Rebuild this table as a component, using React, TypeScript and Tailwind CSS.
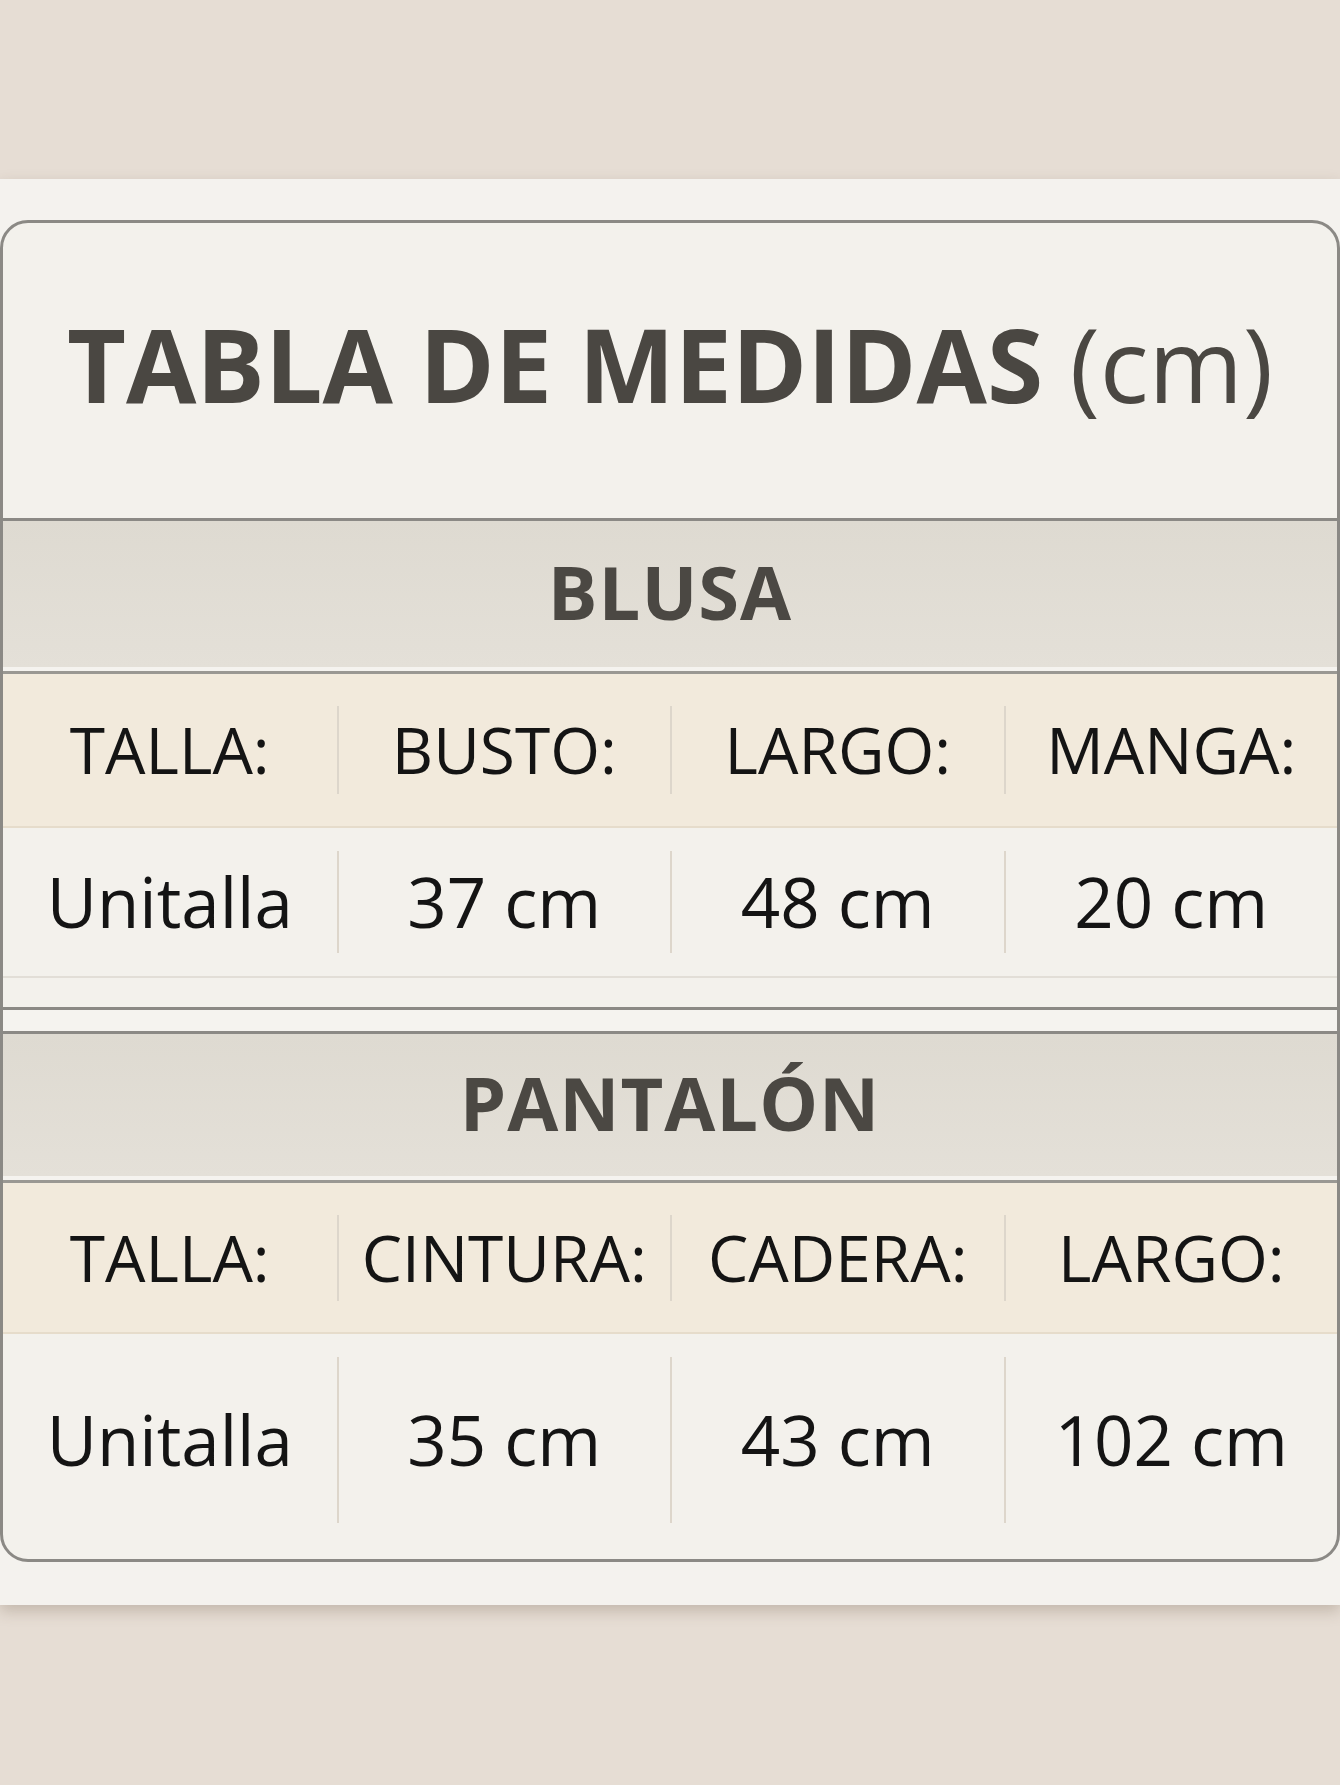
const font = { fontFamily: '"Open Sans", "Noto Sans", sans-serif' }

type Section = {
  name: string
  labels: string[]
  values: string[]
  valueRowH: string
  dividerH: string
}

const sections: Section[] = [
  {
    name: 'BLUSA',
    labels: ['TALLA:', 'BUSTO:', 'LARGO:', 'MANGA:'],
    values: ['Unitalla', '37 cm', '48 cm', '20 cm'],
    valueRowH: 'h-[150px]',
    dividerH: 'h-[102px]',
  },
  {
    name: 'PANTALÓN',
    labels: ['TALLA:', 'CINTURA:', 'CADERA:', 'LARGO:'],
    values: ['Unitalla', '35 cm', '43 cm', '102 cm'],
    valueRowH: 'h-[226px] pb-[14px]',
    dividerH: 'h-[166px]',
  },
]

function Row({ items, className, dividerH }: { items: string[]; className: string; dividerH: string }) {
  return (
    <div className={`flex items-center ${className}`}>
      {items.map((t, i) => (
        <div key={i} className="flex flex-1 items-center">
          {i > 0 && <div className={`w-[2px] ${dividerH} bg-[#ddd6cb]`} />}
          <div className="flex-1 text-center text-[#141414]">{t}</div>
        </div>
      ))}
    </div>
  )
}

function Band({ name, h }: { name: string; h: string }) {
  return (
    <div className={`flex ${h} items-center justify-center bg-gradient-to-b from-[#dedad1] to-[#e4e0d8] pb-[6px]`}>
      <span className="text-[74px] font-bold tracking-[1px] text-[#4b4843]">{name}</span>
    </div>
  )
}

export default function App() {
  return (
    <div className="h-[1785px] w-full overflow-hidden bg-[#e6ddd4] pt-[179px]" style={font}>
      {/* paper */}
      <div className="h-[1426px] bg-[#f4f2ee] pt-[41px] shadow-[0_6px_14px_rgba(90,70,50,0.25)]">
        <div className="h-[1342px] overflow-hidden rounded-[28px] border-[3px] border-[#8b8985] bg-[#f3f1ec]">
          {/* title */}
          <div className="flex h-[295px] items-center justify-center pb-[14px]">
            <h1 className="text-[102px] leading-none text-[#4a4742]">
              <span className="font-bold">TABLA DE MEDIDAS</span>{' '}
              <span className="font-normal">(cm)</span>
            </h1>
          </div>
          <div className="h-[3px] bg-[#8b8985]" />

          {/* blusa */}
          <Band name={sections[0].name} h="h-[146px]" />
          <div className="h-[4px] bg-[#f5f3ef]" />
          <div className="h-[3px] bg-[#9a9893]" />
          <Row
            items={sections[0].labels}
            className="h-[154px] bg-[#f2eadc] text-[64px] border-b-[2px] border-[#e6dccb]"
            dividerH="h-[88px]"
          />
          <Row
            items={sections[0].values}
            className={`${sections[0].valueRowH} text-[69px] border-b-[2px] border-[#e2ded7]`}
            dividerH={sections[0].dividerH}
          />
          <div className="h-[29px]" />
          <div className="h-[3px] bg-[#8b8985]" />
          <div className="h-[21px] bg-[#f5f3ef]" />
          <div className="h-[3px] bg-[#8b8985]" />

          {/* pantalon */}
          <Band name={sections[1].name} h="h-[142px]" />
          <div className="h-[4px] bg-[#f5f3ef]" />
          <div className="h-[3px] bg-[#9a9893]" />
          <Row
            items={sections[1].labels}
            className="h-[151px] bg-[#f2eadc] text-[64px] border-b-[2px] border-[#e6dccb]"
            dividerH="h-[86px]"
          />
          <Row
            items={sections[1].values}
            className={`${sections[1].valueRowH} text-[69px]`}
            dividerH={sections[1].dividerH}
          />
        </div>
      </div>
    </div>
  )
}
